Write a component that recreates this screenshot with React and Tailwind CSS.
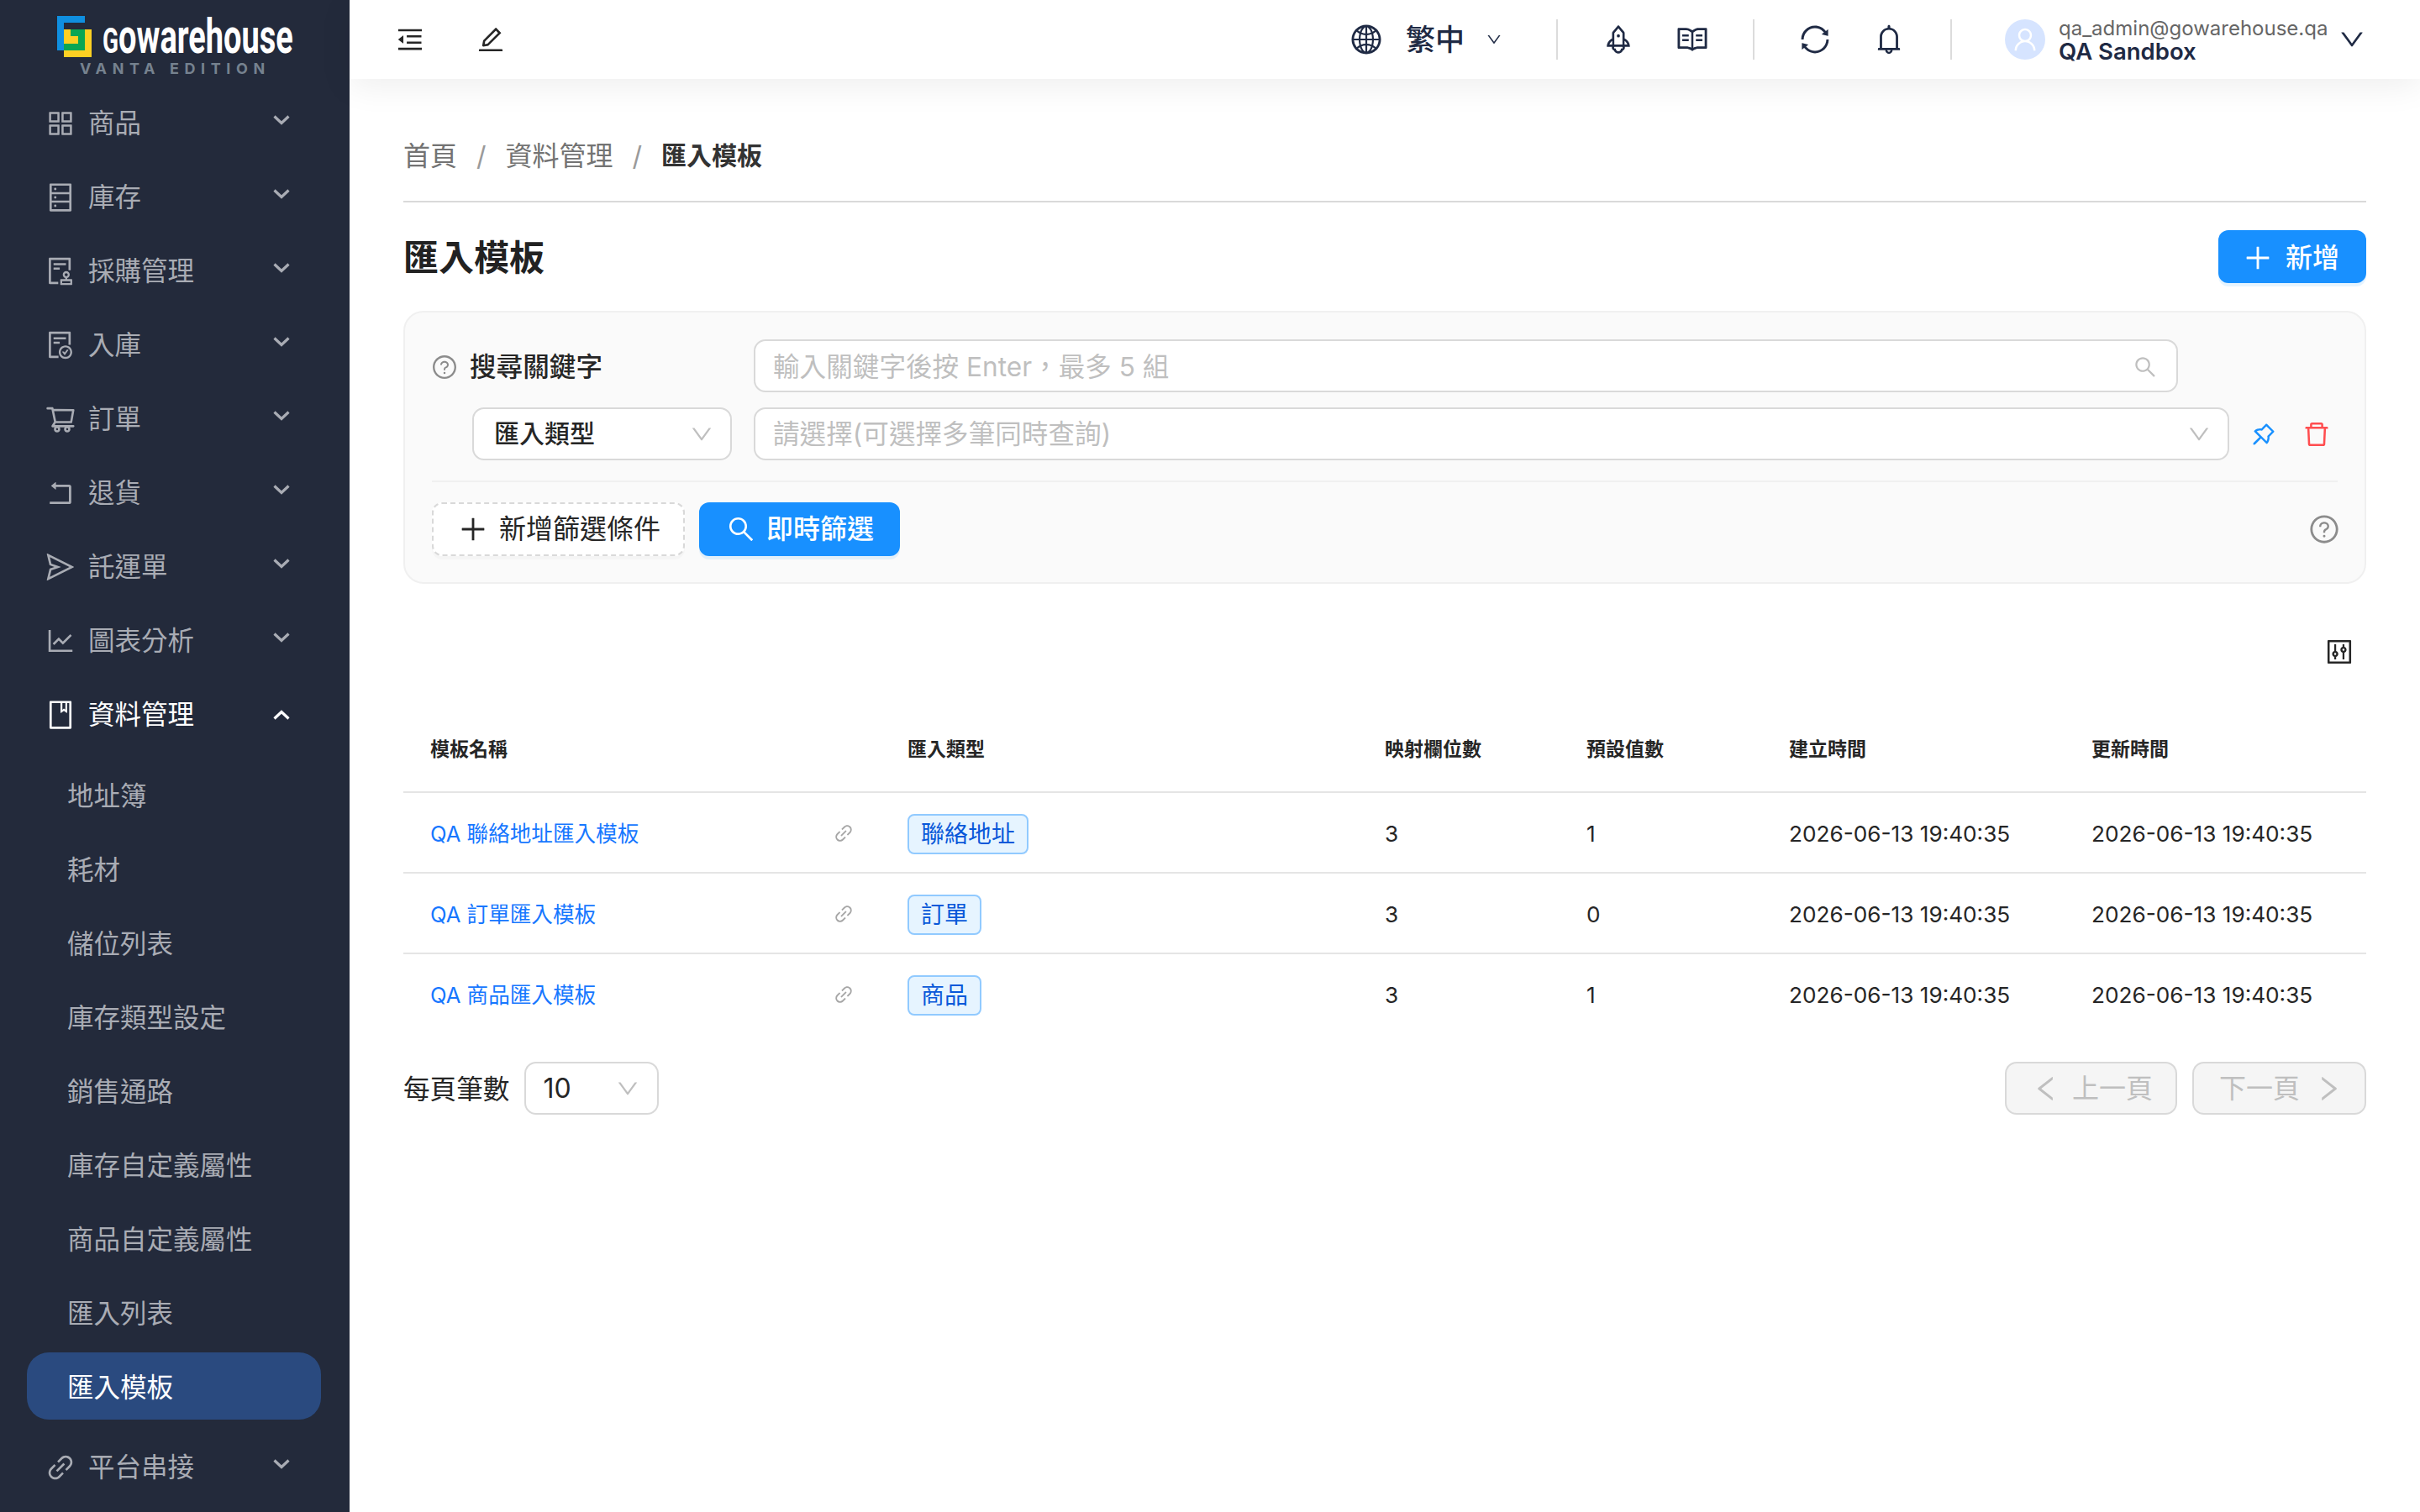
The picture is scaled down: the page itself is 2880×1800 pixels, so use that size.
import React from "react";
import {
  AiOutlineAppstore, AiOutlineDatabase, AiOutlineAudit, AiOutlineFileDone, AiOutlineShoppingCart,
  AiOutlineRollback, AiOutlineSend, AiOutlineLineChart, AiOutlineBook, AiOutlineLink,
  AiOutlineMenuFold, AiOutlineEdit, AiOutlineGlobal, AiOutlineDown, AiOutlineRocket, AiOutlineRead,
  AiOutlineSync, AiOutlineBell, AiOutlineUser, AiOutlineSearch, AiOutlinePlus, AiOutlinePushpin,
  AiOutlineDelete, AiOutlineQuestionCircle, AiOutlineControl, AiOutlineLeft, AiOutlineRight,
} from "react-icons/ai";

const Chevron = ({ up }) => (
  <svg viewBox="0 0 20 12" className={`w-5 h-3 shrink-0 ${up ? "" : "mb-2"}`} fill="none" stroke="currentColor" strokeWidth="3.2">
    <polyline points={up ? "1.5,10.5 10,2.5 18.5,10.5" : "1.5,1.5 10,9.5 18.5,1.5"} />
  </svg>
);

const NavItem = ({ icon: Icon, label, up, white }) => (
  <div className={`flex h-[88px] items-center pl-[53px] pr-[71px] ${white ? "text-white" : "text-[#a9acb4]"}`}>
    <Icon className="text-[38px] shrink-0" />
    <span className="ml-[14px] flex-1 text-[31.5px]">{label}</span>
    <Chevron up={up} />
  </div>
);

const Logo = () => (
  <div className="relative h-[103px]">
    <svg viewBox="0 0 41 49" className="absolute left-[68px] top-[19px] w-[41px] h-[49px]">
      <rect x="8" y="16" width="33" height="33" fill="#fdd023" />
      <path d="M0 0H33V8H8V41H0Z" fill="#0f8fe0" />
      <path d="M16 16H33V41H8V33H25V24H16Z" fill="#0aa653" />
    </svg>
    <span className="absolute left-[122px] top-[20px] origin-left scale-x-[0.666] font-['Roboto',sans-serif] text-[57px] leading-[48px] font-bold text-white">
      <span className="uppercase text-[42px]">g</span>owarehouse
    </span>
    <span className="absolute left-[95px] top-[72px] text-[18px] leading-[20px] font-bold tracking-[6.6px] text-[#76828f]">VANTA EDITION</span>
  </div>
);

const subs = ["地址簿", "耗材", "儲位列表", "庫存類型設定", "銷售通路", "庫存自定義屬性", "商品自定義屬性", "匯入列表", "匯入模板"];

const Sidebar = () => (
  <aside className="w-[416px] h-[1800px] shrink-0 overflow-hidden bg-[#232a3b]">
    <Logo />
    <NavItem icon={AiOutlineAppstore} label="商品" />
    <NavItem icon={AiOutlineDatabase} label="庫存" />
    <NavItem icon={AiOutlineAudit} label="採購管理" />
    <NavItem icon={AiOutlineFileDone} label="入庫" />
    <NavItem icon={AiOutlineShoppingCart} label="訂單" />
    <NavItem icon={AiOutlineRollback} label="退貨" />
    <NavItem icon={AiOutlineSend} label="託運單" />
    <NavItem icon={AiOutlineLineChart} label="圖表分析" />
    <NavItem icon={AiOutlineBook} label="資料管理" up white />
    <div className="mt-[11px] mb-[13px] flex flex-col gap-2 pl-8 pr-[34px]">
      {subs.map((s) => {
        const active = s === "匯入模板";
        return (
          <div key={s} className={`flex h-20 items-center pl-12 pt-[3px] text-[31.5px] rounded-[26px] ${active ? "bg-[#2a4a7f] text-white" : "text-[#a9acb4]"}`}>{s}</div>
        );
      })}
    </div>
    <NavItem icon={AiOutlineLink} label="平台串接" />
  </aside>
);

const HeaderIcon = ({ icon: Icon, className }) => (
  <Icon className={`text-[40px] text-[#1f2a44] shrink-0 ${className}`} />
);
const Divider = ({ className }) => <div className={`h-12 w-0.5 bg-[#dcdcdc] shrink-0 ${className}`} />;

const Header = () => (
  <header className="relative z-10 flex h-[94px] items-center bg-white shadow-[0_8px_40px_rgba(0,0,0,0.07)]">
    <AiOutlineMenuFold className="ml-[54px] text-[36px] text-[#262626]" />
    <AiOutlineEdit className="ml-[60px] text-[36px] text-[#262626]" />
    <div className="ml-auto flex items-center pr-[64px]">
      <HeaderIcon icon={AiOutlineGlobal} />
      <span className="ml-[27px] text-[35px] font-medium text-[#1f2a44]">繁中</span>
      <AiOutlineDown className="ml-[25px] text-[20px] text-[#1f2a44]" />
      <Divider className="ml-[64px]" />
      <HeaderIcon icon={AiOutlineRocket} className="ml-[52px]" />
      <HeaderIcon icon={AiOutlineRead} className="ml-12" />
      <Divider className="ml-[52px]" />
      <HeaderIcon icon={AiOutlineSync} className="ml-[52px]" />
      <HeaderIcon icon={AiOutlineBell} className="ml-[48px]" />
      <Divider className="ml-[53px]" />
      <div className="ml-[63px] flex h-12 w-12 items-center justify-center rounded-full bg-[#d6e4ff] text-white">
        <AiOutlineUser className="text-[34px]" />
      </div>
      <div className="ml-4 flex w-[318px] flex-col pt-[2px]">
        <span className="text-[24px] leading-[26px] text-[#666]">qa_admin@gowarehouse.qa</span>
        <span className="text-[27.5px] leading-[28px] font-semibold text-[#1f2a44]">QA Sandbox</span>
      </div>
      <AiOutlineDown className="ml-[14px] text-[34px] text-[#1f2a44]" />
    </div>
  </header>
);

const Field = ({ placeholder, className, children }) => (
  <div className={`flex h-[63px] items-center justify-between rounded-[14px] border-2 border-[#d9d9d9] bg-white pl-[21px] text-[31.6px] text-[#bfbfbf] ${className}`}>
    <span>{placeholder}</span>
    {children}
  </div>
);

const FilterCard = () => (
  <section className="mt-[33px] rounded-3xl border-2 border-[#f0f0f0] bg-[#fafafa] pl-8 pr-8 pt-8 pb-[31px]">
    <div className="flex items-center">
      <div className="flex w-[383px] items-center pt-[3px]">
        <AiOutlineQuestionCircle className="-ml-[1px] text-[32px] text-[#8c8c8c]" />
        <span className="ml-[14px] text-[31.6px] font-medium text-[#262626]">搜尋關鍵字</span>
      </div>
      <Field placeholder="輸入關鍵字後按 Enter，最多 5 組" className="w-[1695px] pr-[22px] pt-[2px]">
        <AiOutlineSearch className="text-[30px] text-[#bfbfbf]" />
      </Field>
    </div>
    <div className="mt-[18px] flex items-center pl-12">
      <div className="flex h-[63px] w-[309px] items-center justify-between rounded-[14px] border-2 border-[#d9d9d9] bg-white pl-6 pr-[19px] text-[30px] font-medium text-[#262626]">
        匯入類型
        <AiOutlineDown className="text-[30px] text-[#bfbfbf]" />
      </div>
      <Field placeholder="請選擇(可選擇多筆同時查詢)" className="ml-[26px] w-[1756px] pr-[19px]">
        <AiOutlineDown className="text-[30px] text-[#bfbfbf]" />
      </Field>
      <AiOutlinePushpin className="ml-[24px] text-[34px] text-[#1890ff]" />
      <AiOutlineDelete className="ml-[28px] text-[36px] text-[#ff4d4f]" />
    </div>
    <div className="mt-6 h-0.5 bg-[#f0f0f0]" />
    <div className="mt-6 flex items-center">
      <div className="flex h-16 w-[301px] items-center rounded-xl border-2 border-dashed border-[#d9d9d9] bg-white pl-[28px] text-[32px] text-[#262626] shadow-[0_4px_0_rgba(0,0,0,0.02)]">
        <AiOutlinePlus className="text-[38px]" />
        <span className="ml-[12px]">新增篩選條件</span>
      </div>
      <div className="ml-[17px] flex h-16 w-[239px] items-center rounded-xl bg-[#1890ff] pl-8 text-[32px] font-medium text-white shadow-[0_4px_0_rgba(5,145,255,0.1)]">
        <AiOutlineSearch className="text-[36px]" />
        <span className="ml-[12px]">即時篩選</span>
      </div>
      <AiOutlineQuestionCircle className="ml-auto -mr-[3px] text-[38px] text-[#8c8c8c]" />
    </div>
  </section>
);

const cols = "grid grid-cols-[568px_568px_240px_241px_360px_359px] items-center";
const rows = [
  ["QA 聯絡地址匯入模板", "聯絡地址", "3", "1"],
  ["QA 訂單匯入模板", "訂單", "3", "0"],
  ["QA 商品匯入模板", "商品", "3", "1"],
];
const date = "2026-06-13 19:40:35";

const Table = () => (
  <div className="mt-[50px]">
    <div className={`${cols} h-[104px] pt-[3px] border-b-2 border-[#e5e5e5] text-[23px] font-semibold text-[#262626]`}>
      {["模板名稱", "匯入類型", "映射欄位數", "預設值數", "建立時間", "更新時間"].map((h) => (
        <div key={h} className="pl-8">{h}</div>
      ))}
    </div>
    {rows.map((r, i) => (
      <div key={r[0]} className={`${cols} h-24 text-[26.2px] text-[#262626] ${i < 2 ? "pt-[3px] border-b-2 border-[#e5e5e5]" : "pt-[1px]"}`}>
        <div className="flex items-center justify-between pl-8 pr-[31px]">
          <span className="pt-[2px] text-[25.6px] text-[#1677ff]">{r[0]}</span>
          <AiOutlineLink className="text-[26px] text-[#a6a6a6]" />
        </div>
        <div className="pl-8">
          <span className="inline-flex h-12 items-center rounded-lg border-2 border-[#91caff] bg-[#e6f4ff] px-[14px] text-[28px] text-[#0958d9]">{r[1]}</span>
        </div>
        <div className="pl-8">{r[2]}</div>
        <div className="pl-8">{r[3]}</div>
        <div className="pl-8">{date}</div>
        <div className="pl-8">{date}</div>
      </div>
    ))}
  </div>
);

const Pager = () => (
  <div className="mt-8 flex items-center">
    <span className="pt-[2px] text-[31.6px] text-[#262626]">每頁筆數</span>
    <div className="ml-[18px] flex h-[63px] w-[160px] items-center justify-between rounded-[14px] border-2 border-[#d9d9d9] bg-white pl-5 pr-[20px] text-[32px] text-[#262626]">
      10
      <AiOutlineDown className="text-[30px] text-[#bfbfbf]" />
    </div>
    <div className="ml-auto flex h-[63px] w-[205px] items-center rounded-[14px] border-2 border-[#d9d9d9] bg-[#f5f5f5] pl-7 text-[32px] text-[#bfbfbf]">
      <AiOutlineLeft className="text-[38px]" />
      <span className="ml-[12px]">上一頁</span>
    </div>
    <div className="ml-[18px] flex h-[63px] w-[207px] items-center rounded-[14px] border-2 border-[#d9d9d9] bg-[#f5f5f5] pl-[30px] text-[32px] text-[#bfbfbf]">
      <span>下一頁</span>
      <AiOutlineRight className="ml-[15px] text-[38px]" />
    </div>
  </div>
);

export default function App() {
  return (
    <div className="flex h-[1800px] w-[2880px] overflow-hidden bg-white font-['Inter','Noto_Sans_CJK_TC',sans-serif]">
      <Sidebar />
      <main className="flex-1 min-w-0">
        <Header />
        <div className="px-16">
          <div className="flex h-[54px] items-center mt-16 pt-[1px] text-[32px] text-[#737373]">
            <span>首頁</span>
            <span className="mx-[23px] text-[#9a9a9a]">/</span>
            <span>資料管理</span>
            <span className="mx-[23px] text-[#9a9a9a]">/</span>
            <span className="text-[30px] font-semibold text-[#333]">匯入模板</span>
          </div>
          <div className="mt-[27px] h-0.5 bg-[#d9d9d9]" />
          <div className="mt-[33px] flex h-[63px] items-center justify-between">
            <h1 className="pt-[2px] text-[42px] font-bold text-[#222]">匯入模板</h1>
            <div className="flex h-[63px] w-[176px] items-center rounded-xl bg-[#1890ff] pl-[28px] pt-[2px] text-[32px] font-medium text-white shadow-[0_4px_0_rgba(5,145,255,0.1)]">
              <AiOutlinePlus className="text-[38px]" />
              <span className="ml-[14px]">新增</span>
            </div>
          </div>
          <FilterCard />
          <div className="mt-[66px] flex h-[29px] items-center justify-end pr-[14px]">
            <AiOutlineControl className="text-[36px] text-[#262626]" />
          </div>
          <Table />
          <Pager />
        </div>
      </main>
    </div>
  );
}
